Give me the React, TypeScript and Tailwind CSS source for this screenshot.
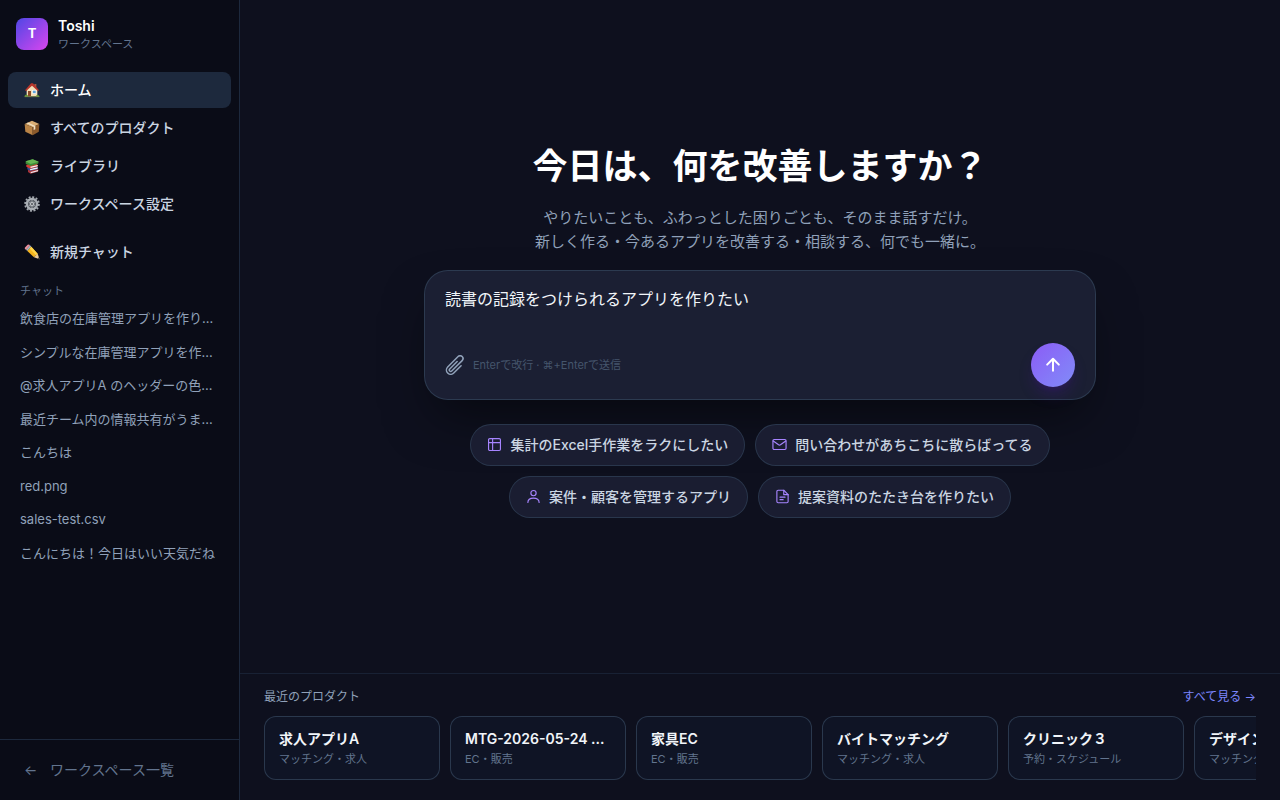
import type { ReactNode } from 'react';

function HouseIcon() {
  return (
    <svg viewBox="0 0 24 24" className="size-4" aria-hidden="true">
      <path d="M15.5 3h3v6h-3z" fill="#a8553a" />
      <path d="M4 11 12 3.5 20 11v10.5H4z" fill="#f3dfb8" />
      <path d="M1.5 12.5 10.5 2h3l9 10.5-1.8 1L12 5.5l-8.7 8z" fill="#b8352b" />
      <rect x="6" y="13.5" width="4.5" height="8" fill="#8a4a26" />
      <rect x="13" y="12.5" width="5" height="4.5" fill="#5ea3d8" stroke="#fff" strokeWidth="0.8" />
      <path d="M1 21c0-2 4-2.5 5 0v1.5H1zM18 21.5c.5-2.500 4-2.500 5 0v1h-5z" fill="#5f9636" />
      <path d="M1 21.5h22v1.2H1z" fill="#7d8b4a" />
    </svg>
  );
}

function PackageIcon() {
  return (
    <svg viewBox="0 0 24 24" className="size-4" aria-hidden="true">
      <path d="M1 6 12 1l11 5-10 5z" fill="#d9ad74" />
      <path d="M1 6l12 5v12L2 17.5z" fill="#b98346" />
      <path d="M23 6l-10 5v12l9.2-5.5z" fill="#8c5a2b" />
      <path d="M6 3.7 17 9v5l-2.5 1V10.2L3.8 4.8z" fill="#efe0c4" />
    </svg>
  );
}

function BooksIcon() {
  return (
    <svg viewBox="0 0 24 24" className="size-4" aria-hidden="true">
      <path d="M6 17.500 18 15l4 3-1 2.500-11 3-4-2.500z" fill="#a93238" />
      <path d="M10 21 21 18v2l-11 3z" fill="#e9e9ee" />
      <path d="M5 14 18 12l3 2.500-1 2.500-11 2-4-2z" fill="#2f4f96" />
      <path d="M9 16.500 20.500 14v2L9.500 18.500z" fill="#f2f2f5" />
      <path d="M3.500 10l14.500-2 3 3-1 2.500-10.500 2.500-6-3z" fill="#d63b33" />
      <path d="M9.500 13 20.500 10.500v2L10 15z" fill="#f2f2f5" />
      <path d="M2.500 5 13 2l9 3.500-.8 3L10 12 2.500 8.500z" fill="#3e8b37" />
      <path d="M2.500 5 13 2l9 3.500L10 9z" fill="#67b655" />
    </svg>
  );
}

function GearIcon() {
  return (
    <svg viewBox="0 0 24 24" className="size-4" fill="none" aria-hidden="true">
      <circle cx="12" cy="12" r="10.4" stroke="#a3a8ae" strokeWidth="2.6" strokeDasharray="3 2.445" />
      <circle cx="12" cy="12" r="7.5" stroke="#a9aeb4" strokeWidth="3.8" />
      <circle cx="12" cy="12" r="5.5" fill="#6a6f75" />
      <path d="M12 6v12M6.500 9l11 6M17.500 9l-11 6" stroke="#969ba1" strokeWidth="1.5" />
      <circle cx="12" cy="12" r="3" fill="#c5c8cc" />
      <circle cx="12" cy="12" r="1.4" fill="#44494f" />
    </svg>
  );
}

function PencilIcon() {
  return (
    <svg viewBox="0 0 24 24" className="size-4" aria-hidden="true">
      <path d="M1.2 5.5 5.5 1.2q2-1 3.5.8L3 8.5Q.5 7.5 1.200 5.500z" fill="#ee8f9c" />
      <path d="M3 8.500 9 2l2 2-6 6.500z" fill="#a9b7c2" />
      <path d="M5 10.500 11 4l9.500 10.500-5.500 5.500z" fill="#f6b51e" />
      <path d="M8.500 6.700 11 4l9.500 10.500-2.500 2.500z" fill="#ffd54a" />
      <path d="M15 20l5.500-5.500L23.200 23z" fill="#eccb9c" />
      <path d="M20.300 22l2-2.300.9 3.500z" fill="#3c3c40" />
    </svg>
  );
}

function LineIcon({ children }: { children: ReactNode }) {
  return (
    <svg
      viewBox="0 0 24 24"
      className="size-[15px] shrink-0 text-violet-400"
      fill="none"
      stroke="currentColor"
      strokeWidth="1.8"
      strokeLinecap="round"
      strokeLinejoin="round"
      aria-hidden="true"
    >
      {children}
    </svg>
  );
}

const navItems = [
  { label: 'ホーム', icon: <HouseIcon />, active: true },
  { label: 'すべてのプロダクト', icon: <PackageIcon />, active: false },
  { label: 'ライブラリ', icon: <BooksIcon />, active: false },
  { label: 'ワークスペース設定', icon: <GearIcon />, active: false },
];

const chats = [
  '飲食店の在庫管理アプリを作り...',
  'シンプルな在庫管理アプリを作...',
  '@求人アプリA のヘッダーの色...',
  '最近チーム内の情報共有がうま...',
  'こんちは',
  'red.png',
  'sales-test.csv',
  'こんにちは！今日はいい天気だね',
];

const suggestions = [
  {
    label: '集計のExcel手作業をラクにしたい',
    icon: (
      <LineIcon>
        <rect x="2.5" y="2.5" width="19" height="19" rx="2" />
        <path d="M2.5 9h19M9 2.5v19" />
      </LineIcon>
    ),
  },
  {
    label: '問い合わせがあちこちに散らばってる',
    icon: (
      <LineIcon>
        <rect x="1.5" y="4" width="21" height="16" rx="2" />
        <path d="m2 6.5 8.5 6q1.5 1 3 0l8.5-6" />
      </LineIcon>
    ),
  },
  {
    label: '案件・顧客を管理するアプリ',
    icon: (
      <LineIcon>
        <circle cx="12" cy="6.5" r="4.2" />
        <path d="M3 21.500c0-4.500 3.500-7 9-7s9 2.500 9 7" />
      </LineIcon>
    ),
  },
  {
    label: '提案資料のたたき台を作りたい',
    icon: (
      <LineIcon>
        <path d="M14 2H5a2 2 0 0 0-2 2v16a2 2 0 0 0 2 2h14a2 2 0 0 0 2-2V9z" />
        <path d="M14 2v7h7M8 13h8M8 17h5" />
      </LineIcon>
    ),
  },
];

const products = [
  { name: '求人アプリA', category: 'マッチング・求人' },
  { name: 'MTG-2026-05-24 ...', category: 'EC・販売' },
  { name: '家具EC', category: 'EC・販売' },
  { name: 'バイトマッチング', category: 'マッチング・求人' },
  { name: 'クリニック３', category: '予約・スケジュール' },
  { name: 'デザイン', category: 'マッチング' },
];

function Sidebar() {
  return (
    <aside className="flex w-60 shrink-0 flex-col border-r border-slate-800 bg-[#0a0c17]">
      <div className="flex items-center gap-2.5 px-4 pt-4 pb-5">
        <div className="flex size-8 items-center justify-center rounded-lg bg-linear-to-br/srgb from-[#4f46e5] to-[#d946ef] text-[13px] font-bold text-white">
          T
        </div>
        <div>
          <div className="text-sm leading-5 font-semibold text-white">Toshi</div>
          <div className="text-[11px] leading-4 text-slate-500">ワークスペース</div>
        </div>
      </div>

      <nav className="flex flex-col gap-0.5 px-2">
        {navItems.map((item) => (
          <a
            key={item.label}
            href="#"
            className={
              item.active
                ? 'flex h-9 items-center gap-2.5 rounded-lg bg-slate-800 px-4 text-sm font-medium text-white'
                : 'flex h-9 items-center gap-2.5 rounded-lg px-4 text-sm font-medium text-slate-300'
            }
          >
            {item.icon}
            {item.label}
          </a>
        ))}
      </nav>

      <div className="px-2 pt-3">
        <button type="button" className="flex h-9 w-full items-center gap-2.5 rounded-lg px-4 text-sm font-medium text-slate-300">
          <PencilIcon />
          新規チャット
        </button>
      </div>

      <div className="flex-1 px-2 pt-[13px]">
        <h2 className="px-3 pb-1 text-[11px] leading-4 text-slate-500">チャット</h2>
        <ul className="flex flex-col gap-0.5">
          {chats.map((chat) => (
            <li key={chat}>
              <a href="#" className="block truncate px-3 py-1.5 text-[13px] leading-normal text-slate-400">
                {chat}
              </a>
            </li>
          ))}
        </ul>
      </div>

      <div className="border-t border-slate-800 px-2 py-3">
        <a href="#" className="flex h-9 items-center gap-2.5 px-4 text-sm text-slate-500">
          <span className="w-4">←</span>
          ワークスペース一覧
        </a>
      </div>
    </aside>
  );
}

function Composer() {
  return (
    <form className="w-full rounded-3xl border border-slate-700/80 bg-[#1b1f33] px-5 pt-4 pb-3 shadow-2xl shadow-black/50">
      <textarea
        rows={2}
        aria-label="メッセージ"
        defaultValue="読書の記録をつけられるアプリを作りたい"
        className="block h-12 w-full resize-none bg-transparent text-base leading-6 text-slate-100 outline-none"
      />
      <div className="mt-2 flex items-center justify-between">
        <div className="flex items-center gap-2">
          <button type="button" aria-label="ファイルを添付" className="text-slate-400">
            <svg viewBox="1.5 1.5 21 21" className="size-5" fill="none" stroke="currentColor" strokeWidth="1.6" strokeLinecap="round" strokeLinejoin="round">
              <path d="m18.375 12.739-7.693 7.693a4.5 4.5 0 0 1-6.364-6.364l10.94-10.94A3 3 0 1 1 19.5 7.372L8.552 18.32m.009-.01-.01.01m5.699-9.941-7.81 7.81a1.5 1.5 0 0 0 2.112 2.13" />
            </svg>
          </button>
          <span className="text-[11px] leading-4 text-slate-600">Enterで改行 · ⌘+Enterで送信</span>
        </div>
        <button
          type="submit"
          aria-label="送信"
          className="flex size-11 items-center justify-center rounded-full bg-linear-to-br/srgb from-[#8b5cf6] to-[#818cf8] text-white shadow-lg shadow-violet-900/30"
        >
          <svg viewBox="0 0 24 24" className="size-5" fill="none" stroke="currentColor" strokeWidth="2.4" strokeLinecap="round" strokeLinejoin="round">
            <path d="M12 19V5M5 11.500 12 4.500l7 7" />
          </svg>
        </button>
      </div>
    </form>
  );
}

function RecentProducts() {
  return (
    <section className="border-t border-slate-800/70 px-6 pt-3.5 pb-5">
      <div className="mb-2.5 flex items-center justify-between text-xs leading-[18px]">
        <h2 className="text-slate-400">最近のプロダクト</h2>
        <a href="#" className="text-indigo-400">すべて見る →</a>
      </div>
      <div className="flex gap-2.5 overflow-hidden">
        {products.map((product) => (
          <a
            key={product.name}
            href="#"
            className="flex w-44 shrink-0 flex-col gap-0.5 rounded-xl border border-slate-700/80 bg-[#0f1425] px-3.5 py-3"
          >
            <span className="truncate text-sm leading-5 font-semibold text-slate-100">{product.name}</span>
            <span className="text-[11px] leading-4 text-slate-500">{product.category}</span>
          </a>
        ))}
      </div>
    </section>
  );
}

export default function App() {
  return (
    <div lang="ja" className="flex min-h-screen bg-[#0e101e] font-['Inter','Noto_Sans_CJK_JP',sans-serif]">
      <Sidebar />
      <div className="flex min-w-0 flex-1 flex-col">
        <main className="flex flex-1 flex-col items-center justify-center px-6 pb-2.5">
          <div className="flex w-full max-w-2xl flex-col items-center">
            <h1 className="mb-5 text-center text-[35px] leading-10 font-bold text-white">今日は、何を改善しますか？</h1>
            <p className="mb-4 text-center text-[15px] leading-6 text-slate-400">
              やりたいことも、ふわっとした困りごとも、そのまま話すだけ。
              <br />
              新しく作る・今あるアプリを改善する・相談する、何でも一緒に。
            </p>
            <Composer />
            <div className="mt-6 flex flex-wrap justify-center gap-2.5">
              {suggestions.map((item) => (
                <button
                  key={item.label}
                  type="button"
                  className="flex items-center gap-2 rounded-full border border-slate-700/70 bg-[#1a1d31] px-4 py-2.5 text-sm leading-5 font-medium text-slate-300"
                >
                  {item.icon}
                  {item.label}
                </button>
              ))}
            </div>
          </div>
        </main>
        <RecentProducts />
      </div>
    </div>
  );
}
